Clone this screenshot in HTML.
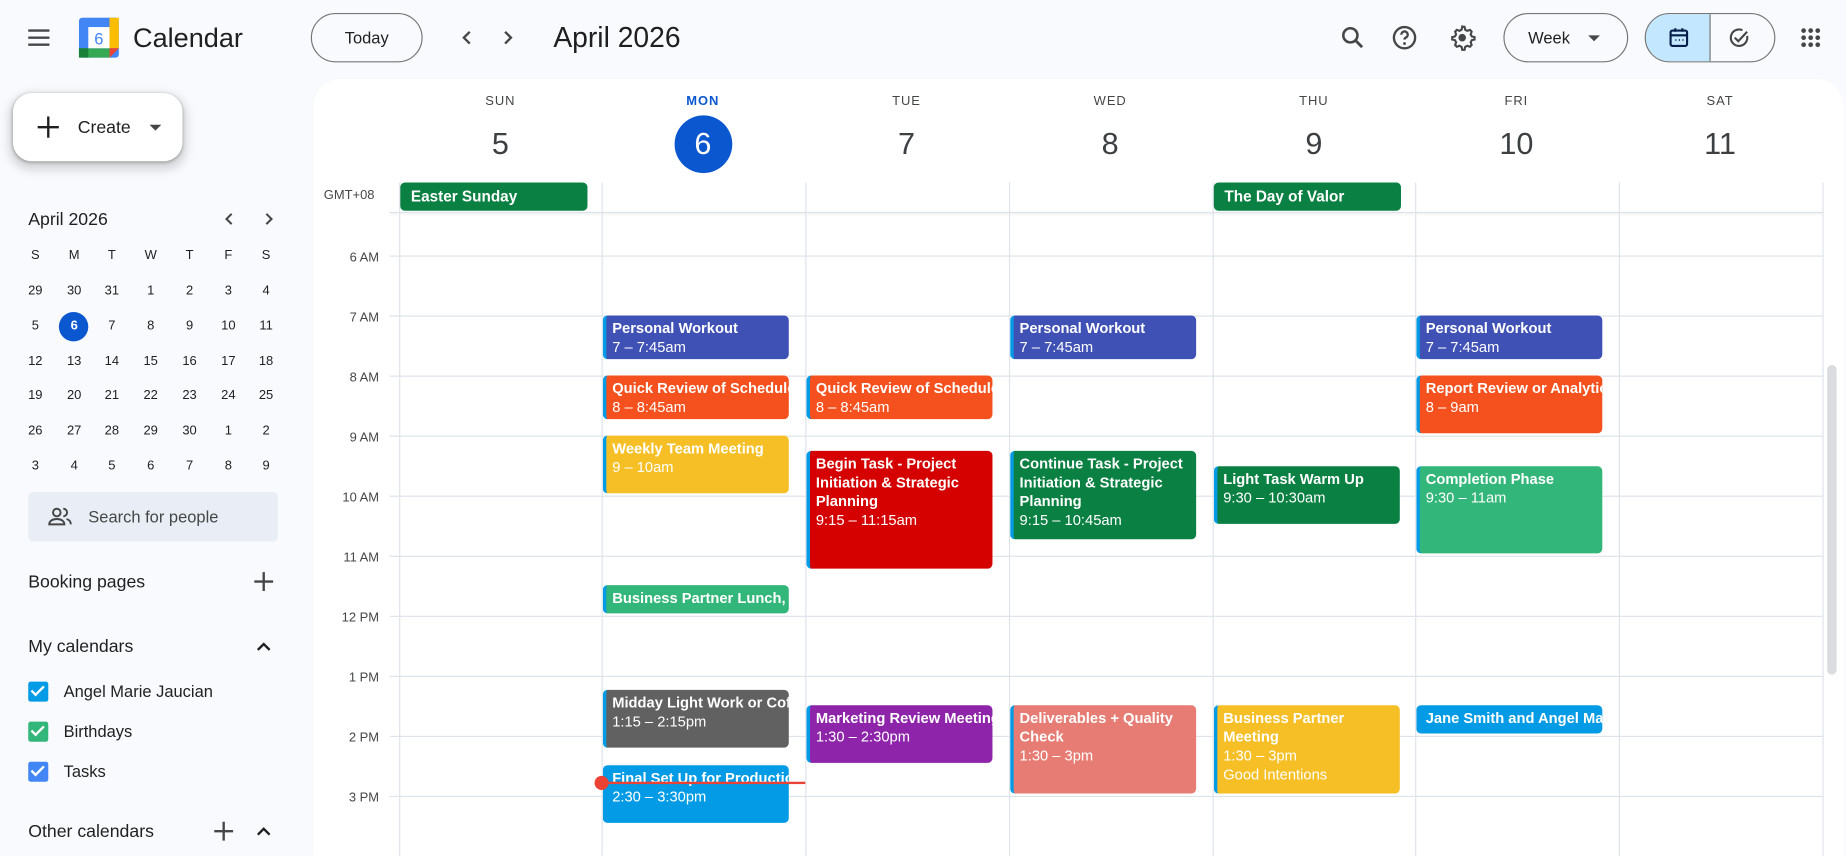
<!DOCTYPE html>
<html><head><meta charset="utf-8"><style>
*{box-sizing:border-box;margin:0;padding:0}
html,body{width:1846px;height:847px;overflow:hidden;background:#f8fafd}
#w{position:absolute;left:0;top:0;width:1568px;height:720px;transform:scale(1.17730);transform-origin:0 0;font-family:"Liberation Sans",sans-serif;color:#1f1f1f}
.a{position:absolute}
.ic{position:absolute}
.btn{position:absolute;border:1px solid #747775;border-radius:22px;font-size:14px;font-weight:500;display:flex;align-items:center;justify-content:center}
.mc{position:absolute;width:24px;text-align:center;font-size:11px;color:#1f1f1f}
.main{position:absolute;left:266px;top:67px;width:1300px;height:660px;background:#fff;border-radius:24px 24px 0 0;overflow:hidden}
.dn{position:absolute;width:172px;text-align:center;font-size:11px;color:#444746;letter-spacing:.8px;top:13px}
.dd{position:absolute;width:172px;text-align:center;font-size:26px;color:#3c4043;top:40px}
.vl{position:absolute;top:88px;bottom:0;width:1px;background:#dde3ea}
.hl{position:absolute;left:65px;right:18px;height:1px;background:#dde3ea}
.hlab{position:absolute;left:0;width:56px;text-align:right;font-size:11px;color:#444746}
.ev{position:absolute;width:158px;border-radius:4px;color:#fff;font-size:12.5px;line-height:16px;padding:3px 3px 0 5px;overflow:hidden;white-space:nowrap;border-left:3px solid #039be5}
.ev b{font-weight:bold;display:block}
.ev.wr{white-space:normal}
.ad{position:absolute;height:24px;border-radius:4px;background:#0b8043;color:#fff;font-size:13px;font-weight:bold;padding:4px 9px;width:159px}
.cb{position:absolute;left:24px;width:17px;height:17px;border-radius:2px}
.cb:after{content:"";position:absolute;left:5px;top:1px;width:4px;height:9px;border:solid #fff;border-width:0 2px 2px 0;transform:rotate(45deg)}
.sl{position:absolute;left:54px;font-size:14px;color:#1f1f1f}
.sh{position:absolute;left:24px;font-size:15px;font-weight:500;color:#1f1f1f}
</style></head><body><div id="w">
<svg class="ic" style="left:21px;top:20px" width="24" height="24" viewBox="0 0 24 24"><path d="M3 6h18M3 12h18M3 18h18" stroke="#444746" stroke-width="2"/></svg>
<svg class="ic" style="left:67px;top:15px" width="34" height="34" viewBox="0 0 34 34"><rect x="0" y="0" width="34" height="34" rx="3" fill="#4285f4"/><rect x="26" y="0" width="8" height="26" fill="#fbbc04"/><rect x="0" y="26" width="26" height="8" fill="#34a853"/><rect x="0" y="26" width="8" height="8" fill="#188038"/><path d="M26 26h8l-8 8z" fill="#ea4335"/><rect x="8" y="8" width="18" height="18" fill="#fff"/><text x="17" y="23" font-size="14" text-anchor="middle" fill="#4285f4" font-family="Liberation Sans">6</text></svg>
<div class="a" style="left:113px;top:19px;font-size:23px;color:#1f1f1f">Calendar</div>
<div class="btn" style="left:264px;top:11px;width:95px;height:42px">Today</div>
<svg class="ic" style="left:389px;top:24px" width="16" height="16" viewBox="0 0 16 16"><path d="M10 3L5 8l5 5" stroke="#444746" stroke-width="2" fill="none"/></svg>
<svg class="ic" style="left:423px;top:24px" width="16" height="16" viewBox="0 0 16 16"><path d="M6 3l5 5-5 5" stroke="#444746" stroke-width="2" fill="none"/></svg>
<div class="a" style="left:470px;top:19px;font-size:24px;color:#1f1f1f">April 2026</div>
<svg class="ic" style="left:1137px;top:20px" width="24" height="24" viewBox="0 0 24 24"><circle cx="10" cy="10" r="6" stroke="#444746" stroke-width="2.2" fill="none"/><path d="M14.5 14.5L20 20" stroke="#444746" stroke-width="2.4"/></svg>
<svg class="ic" style="left:1181px;top:20px" width="24" height="24" viewBox="0 0 24 24"><circle cx="12" cy="12" r="9" stroke="#444746" stroke-width="2" fill="none"/><path d="M9.3 9.5a2.7 2.7 0 1 1 3.8 2.4c-.8.4-1.1.9-1.1 1.8" stroke="#444746" stroke-width="2" fill="none"/><circle cx="12" cy="17" r="1.2" fill="#444746"/></svg>
<svg class="ic" style="left:1230px;top:20px" width="24" height="24" viewBox="0 0 24 24"><path d="M12 2.5l2 .3.5 2.4 1.8 1 2.3-.8 1.4 1.5-.8 2.3 1 1.8 2.3.5v2.1l-2.3.5-1 1.8.8 2.3-1.4 1.5-2.3-.8-1.8 1-.5 2.4h-2l-.5-2.4-1.8-1-2.3.8-1.4-1.5.8-2.3-1-1.8-2.3-.5v-2.1l2.3-.5 1-1.8-.8-2.3 1.4-1.5 2.3.8 1.8-1 .5-2.4z" stroke="#444746" stroke-width="1.8" fill="none"/><circle cx="12" cy="12" r="3.2" fill="#444746"/></svg>
<div class="btn" style="left:1277px;top:11px;width:106px;height:42px;justify-content:flex-start;padding-left:20px">Week<span style="position:absolute;left:71px;top:18px;border:5px solid transparent;border-top-color:#444746;border-bottom:0"></span></div>
<div class="btn" style="left:1397px;top:11px;width:111px;height:42px;overflow:hidden"><div class="a" style="left:0;top:0;width:55px;height:42px;background:#c2e7ff;border-right:1px solid #747775"></div></div>
<svg class="ic" style="left:1416px;top:22px" width="20" height="20" viewBox="0 0 20 20"><rect x="3" y="4" width="14" height="13" rx="1.5" stroke="#041e49" stroke-width="1.8" fill="none"/><path d="M3 8h14M7 2v3M13 2v3" stroke="#041e49" stroke-width="1.8"/><path d="M7 12h1M10 12h1M13 12h1" stroke="#041e49" stroke-width="1.3"/></svg>
<svg class="ic" style="left:1467px;top:22px" width="20" height="20" viewBox="0 0 20 20"><path d="M17 8.5A7 7 0 1 1 13 3.6" stroke="#444746" stroke-width="1.8" fill="none"/><path d="M6.5 10l3 3L17 5" stroke="#444746" stroke-width="1.8" fill="none"/></svg>
<svg class="ic" style="left:1528px;top:22px" width="20" height="20" viewBox="0 0 20 20" fill="#444746"><circle cx="4" cy="4" r="2"/><circle cx="10" cy="4" r="2"/><circle cx="16" cy="4" r="2"/><circle cx="4" cy="10" r="2"/><circle cx="10" cy="10" r="2"/><circle cx="16" cy="10" r="2"/><circle cx="4" cy="16" r="2"/><circle cx="10" cy="16" r="2"/><circle cx="16" cy="16" r="2"/></svg>
<div class="a" style="left:11px;top:79px;width:144px;height:58px;background:#fff;border-radius:16px;box-shadow:0 1px 3px rgba(0,0,0,.3),0 4px 8px 3px rgba(0,0,0,.15)"></div>
<svg class="ic" style="left:30px;top:97px" width="22" height="22" viewBox="0 0 22 22"><path d="M11 2v18M2 11h18" stroke="#1f1f1f" stroke-width="2"/></svg>
<div class="a" style="left:66px;top:100px;font-size:15px;font-weight:500">Create</div>
<div class="a" style="left:127px;top:106px;border:5px solid transparent;border-top-color:#444746;border-bottom:0"></div>
<div class="a" style="left:24px;top:178px;font-size:15px;font-weight:500">April 2026</div>
<svg class="ic" style="left:188px;top:179px" width="14" height="14" viewBox="0 0 16 16"><path d="M10 3L5 8l5 5" stroke="#444746" stroke-width="2" fill="none"/></svg>
<svg class="ic" style="left:221px;top:179px" width="14" height="14" viewBox="0 0 16 16"><path d="M6 3l5 5-5 5" stroke="#444746" stroke-width="2" fill="none"/></svg>
<div class="a" style="left:50px;top:265px;width:25px;height:25px;border-radius:50%;background:#0b57d0"></div>
<div id="mini"></div>
<div class="a" style="left:24px;top:418px;width:212px;height:42px;background:#e9eef6;border-radius:4px"></div>
<svg class="ic" style="left:40px;top:428px" width="22" height="22" viewBox="0 0 24 24"><circle cx="9" cy="8" r="3.5" stroke="#444746" stroke-width="1.8" fill="none"/><path d="M2 19c0-3 3-5 7-5s7 2 7 5z" stroke="#444746" stroke-width="1.8" fill="none"/><path d="M15 4.5a3.5 3.5 0 0 1 0 7M18 14c2 .6 4 2 4 5" stroke="#444746" stroke-width="1.8" fill="none"/></svg>
<div class="a" style="left:75px;top:431px;font-size:14px;color:#444746">Search for people</div>
<div class="sh" style="top:486px">Booking pages</div>
<svg class="ic" style="left:215px;top:485px" width="18" height="18" viewBox="0 0 18 18"><path d="M9 1v16M1 9h16" stroke="#444746" stroke-width="2"/></svg>
<div class="sh" style="top:541px">My calendars</div>
<svg class="ic" style="left:216px;top:541px" width="16" height="16" viewBox="0 0 16 16"><path d="M3 11l5-5 5 5" stroke="#1f1f1f" stroke-width="2" fill="none"/></svg>
<div class="cb" style="top:579px;background:#039be5"></div><div class="sl" style="top:579px">Angel Marie Jaucian</div>
<div class="cb" style="top:613px;background:#33b679"></div><div class="sl" style="top:613px">Birthdays</div>
<div class="cb" style="top:647px;background:#4285f4"></div><div class="sl" style="top:647px">Tasks</div>
<div class="sh" style="top:698px">Other calendars</div>
<svg class="ic" style="left:181px;top:697px" width="18" height="18" viewBox="0 0 18 18"><path d="M9 1v16M1 9h16" stroke="#444746" stroke-width="2"/></svg>
<svg class="ic" style="left:216px;top:698px" width="16" height="16" viewBox="0 0 16 16"><path d="M3 11l5-5 5 5" stroke="#1f1f1f" stroke-width="2" fill="none"/></svg>
<div class="main" id="main">
<div class="a" style="left:9px;top:93px;font-size:11px;color:#444746">GMT+08</div>
<div class="a" style="left:65px;top:113px;right:18px;height:1px;background:#dde3ea;box-shadow:0 1px 2px rgba(0,0,0,.1)"></div>
<div class="a" style="left:1286px;top:243px;width:8px;height:263px;background:#dadce0;border-radius:4px"></div>
</div>
</div>
<script>
var m=document.getElementById('mini');
var xs=[30,63,95,128,161,194,226],ys=[247,277,307,336,366,396];
var h='';'SMTWTFS'.split('').forEach(function(c,i){h+='<div class="mc" style="left:'+(xs[i]-12)+'px;top:211px">'+c+'</div>'});
var d=[29,30,31];for(var i=1;i<=30;i++)d.push(i);for(i=1;i<=9;i++)d.push(i);
d.forEach(function(v,k){var r=Math.floor(k/7),c=k%7;var col=(k==8)?'#fff;font-weight:bold':'#1f1f1f';h+='<div class="mc" style="left:'+(xs[c]-12)+'px;top:'+(ys[r]-6)+'px;color:'+col+'">'+v+'</div>'});
m.outerHTML=h;
var M=document.getElementById('main'),s='';
var cx=[73,245,418,591,764,936,1109];var nm=['SUN','MON','TUE','WED','THU','FRI','SAT'],nu=[5,6,7,8,9,10,11];
for(i=0;i<7;i++){s+='<div class="dn" style="left:'+cx[i]+'px;'+(i==1?'color:#0b57d0;font-weight:bold':'')+'">'+nm[i]+'</div>';
if(i==1)s+='<div class="a" style="left:'+(cx[i]+62)+'px;top:31px;width:49px;height:49px;border-radius:50%;background:#0b57d0"></div>';
s+='<div class="dd" style="left:'+cx[i]+'px;'+(i==1?'color:#fff':'')+'">'+nu[i]+'</div>';
s+='<div class="vl" style="left:'+cx[i]+'px"></div>';}
s+='<div class="vl" style="left:1282px"></div>';
var hl=['6 AM','7 AM','8 AM','9 AM','10 AM','11 AM','12 PM','1 PM','2 PM','3 PM'];
hl.forEach(function(t,k){var y=150+51*k;s+='<div class="hl" style="top:'+y+'px"></div><div class="hlab" style="top:'+(y-4)+'px">'+t+'</div>'});
s+='<div class="ad" style="left:74px;top:88px">Easter Sunday</div><div class="ad" style="left:765px;top:88px">The Day of Valor</div>';
function ev(c,t1,t2,col,html,wr){s+='<div class="ev'+(wr?' wr':'')+'" style="left:'+(cx[c]+1)+'px;top:'+(t1-67)+'px;height:'+(t2-t1)+'px;background:'+col+'">'+html+'</div>'}
ev(1,268,305,'#3f51b5','<b>Personal Workout</b>7 – 7:45am');
ev(1,319,356,'#f4511e','<b>Quick Review of Schedule</b>8 – 8:45am');
ev(1,370,419,'#f6bf26','<b>Weekly Team Meeting</b>9 – 10am');
ev(1,497,521,'#33b679','<b>Business Partner Lunch, 12pm</b>');
ev(1,586,635,'#616161','<b>Midday Light Work or Coffee</b>1:15 – 2:15pm');
ev(1,650,699,'#039be5','<b>Final Set Up for Production</b>2:30 – 3:30pm');
ev(2,319,356,'#f4511e','<b>Quick Review of Schedule</b>8 – 8:45am');
ev(2,383,483,'#d50000','<b>Begin Task - Project Initiation &amp; Strategic Planning</b>9:15 – 11:15am',1);
ev(2,599,648,'#8e24aa','<b>Marketing Review Meeting</b>1:30 – 2:30pm');
ev(3,268,305,'#3f51b5','<b>Personal Workout</b>7 – 7:45am');
ev(3,383,458,'#0b8043','<b>Continue Task - Project Initiation &amp; Strategic Planning</b>9:15 – 10:45am',1);
ev(3,599,674,'#e67c73','<b>Deliverables + Quality Check</b>1:30 – 3pm',1);
ev(4,396,445,'#0b8043','<b>Light Task Warm Up</b>9:30 – 10:30am');
ev(4,599,674,'#f6bf26','<b>Business Partner Meeting</b>1:30 – 3pm<br>Good Intentions',1);
ev(5,268,305,'#3f51b5','<b>Personal Workout</b>7 – 7:45am');
ev(5,319,368,'#f4511e','<b>Report Review or Analytics</b>8 – 9am');
ev(5,396,470,'#33b679','<b>Completion Phase</b>9:30 – 11am');
ev(5,599,623,'#039be5','<b>Jane Smith and Angel Marie</b>');
s+='<div class="a" style="left:245px;top:597px;width:173px;height:2px;background:#ea4335"></div><div class="a" style="left:239px;top:592px;width:12px;height:12px;border-radius:50%;background:#ea4335"></div>';
M.insertAdjacentHTML('beforeend',s);
</script>
</body></html>
